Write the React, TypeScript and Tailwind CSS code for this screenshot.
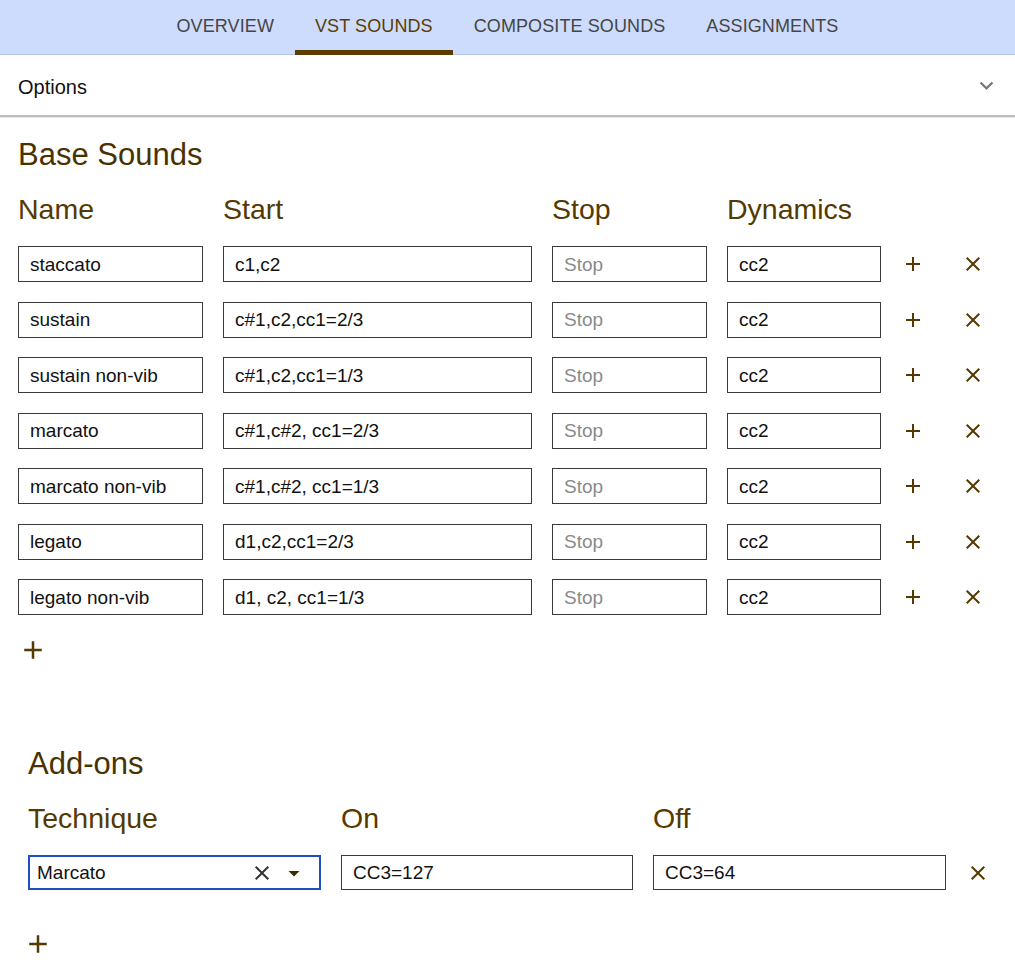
import React from "react";

const BROWN = "#553900";

const PlusIcon = ({ size = 24, className = "" }: { size?: number; className?: string }) => (
  <svg width={size} height={size} viewBox="0 0 24 24" className={className} fill={BROWN}>
    <path d="M19 13h-6v6h-2v-6H5v-2h6V5h2v6h6v2z" />
  </svg>
);

const CloseIcon = ({ size = 24, color = BROWN }: { size?: number; color?: string }) => (
  <svg width={size} height={size} viewBox="0 0 24 24" fill={color}>
    <path d="M19 6.41 17.59 5 12 10.59 6.41 5 5 6.41 10.59 12 5 17.59 6.41 19 12 13.41 17.59 19 19 17.59 13.41 12z" />
  </svg>
);

const rows = [
  ["staccato", "c1,c2"],
  ["sustain", "c#1,c2,cc1=2/3"],
  ["sustain non-vib", "c#1,c2,cc1=1/3"],
  ["marcato", "c#1,c#2, cc1=2/3"],
  ["marcato non-vib", "c#1,c#2, cc1=1/3"],
  ["legato", "d1,c2,cc1=2/3"],
  ["legato non-vib", "d1, c2, cc1=1/3"],
];

const Field = ({ value, placeholder, w, h = 36 }: { value?: string; placeholder?: string; w: string; h?: number }) => (
  <div
    className={`${w} border border-[#3a3a3a] bg-white flex items-center pl-[11px] text-[19px] leading-none`}
    style={{ height: h }}
  >
    {value ? <span className="text-[#111]">{value}</span> : <span className="text-[#8a8a8a]">{placeholder}</span>}
  </div>
);

export default function App() {
  return (
    <div className="w-[1015px] min-h-[974px] bg-white" style={{ fontFamily: '"Liberation Sans", Arial, sans-serif' }}>
      {/* Tabs */}
      <div className="h-[55px] bg-[#cddcfc] border-b border-[#b3c5e6] flex justify-center">
        <div className="flex h-full">
          {["OVERVIEW", "VST SOUNDS", "COMPOSITE SOUNDS", "ASSIGNMENTS"].map((t) => {
            const active = t === "VST SOUNDS";
            return (
              <div key={t} className="relative px-[20.5px] flex items-center text-[18px] tracking-[0.1px] pb-[2px]">
                <span className={active ? "text-[#5a3c05]" : "text-[#454545]"}>{t}</span>
                {active && <div className="absolute left-0 right-0 bottom-[-1px] h-[5px] bg-[#5a3b00]" />}
              </div>
            );
          })}
        </div>
      </div>

      {/* Options */}
      <div className="h-[60px] flex items-center justify-between pl-[18px] pr-[15px] pt-[4px]">
        <span className="text-[20px] text-[#111]">Options</span>
        <svg width="27" height="27" viewBox="0 0 24 24" fill="#777" className="-mt-[4px]">
          <path d="M16.59 8.59 12 13.17 7.41 8.59 6 10l6 6 6-6z" />
        </svg>
      </div>
      <div className="h-[2px] bg-[#bdbdbd]" />
      <div className="h-[1px] bg-[#e6e6e6]" />

      {/* Base Sounds */}
      <div className="pl-[18px] pt-[19px]">
        <div className="text-[31px] leading-[36px] text-[#4a3200]">Base Sounds</div>
        <div className="flex mt-[19px] text-[28.5px] leading-[34px] text-[#553900]">
          <div className="w-[185px]">Name</div>
          <div className="w-[309px] ml-[20px]">Start</div>
          <div className="w-[155px] ml-[20px]">Stop</div>
          <div className="w-[154px] ml-[20px]">Dynamics</div>
        </div>
        <div className="flex flex-col gap-[19.5px] mt-[20px]">
          {rows.map(([n, s]) => (
            <div key={n} className="flex items-center">
              <Field w="w-[185px]" value={n} />
              <div className="ml-[20px]"><Field w="w-[309px]" value={s} /></div>
              <div className="ml-[20px]"><Field w="w-[155px]" placeholder="Stop" /></div>
              <div className="ml-[20px]"><Field w="w-[154px]" value="cc2" /></div>
              <div className="ml-[20px] flex"><PlusIcon /></div>
              <div className="ml-[36px] flex"><CloseIcon /></div>
            </div>
          ))}
        </div>
        <div className="mt-[20px] flex w-[30px]">
          <PlusIcon size={30} />
        </div>
      </div>

      {/* Add-ons */}
      <div className="pl-[28px] mt-[81px]">
        <div className="text-[31px] leading-[36px] text-[#4a3200]">Add-ons</div>
        <div className="flex mt-[19px] text-[28.5px] leading-[34px] text-[#553900]">
          <div className="w-[293px]">Technique</div>
          <div className="w-[292px] ml-[20px]">On</div>
          <div className="w-[293px] ml-[20px]">Off</div>
        </div>
        <div className="flex items-center mt-[20px]">
          <div className="w-[293px] h-[35px] border-2 border-[#1d4fc4] flex items-center pl-[7px] pt-[1px] text-[19px] text-[#111]">
            <span className="flex-1">Marcato</span>
            <div className="flex mr-[8px]"><CloseIcon color="#333" /></div>
            <svg width="24" height="24" viewBox="0 0 24 24" fill="#3f2b00" className="mr-[13px]">
              <path d="M6.5 10l5.5 5.5 5.5-5.5z" />
            </svg>
          </div>
          <div className="ml-[20px]"><Field w="w-[292px]" value="CC3=127" h={35} /></div>
          <div className="ml-[20px]"><Field w="w-[293px]" value="CC3=64" h={35} /></div>
          <div className="ml-[20px] flex"><CloseIcon /></div>
        </div>
        <div className="mt-[39px] flex -ml-[5px]">
          <PlusIcon size={30} />
        </div>
      </div>
    </div>
  );
}
